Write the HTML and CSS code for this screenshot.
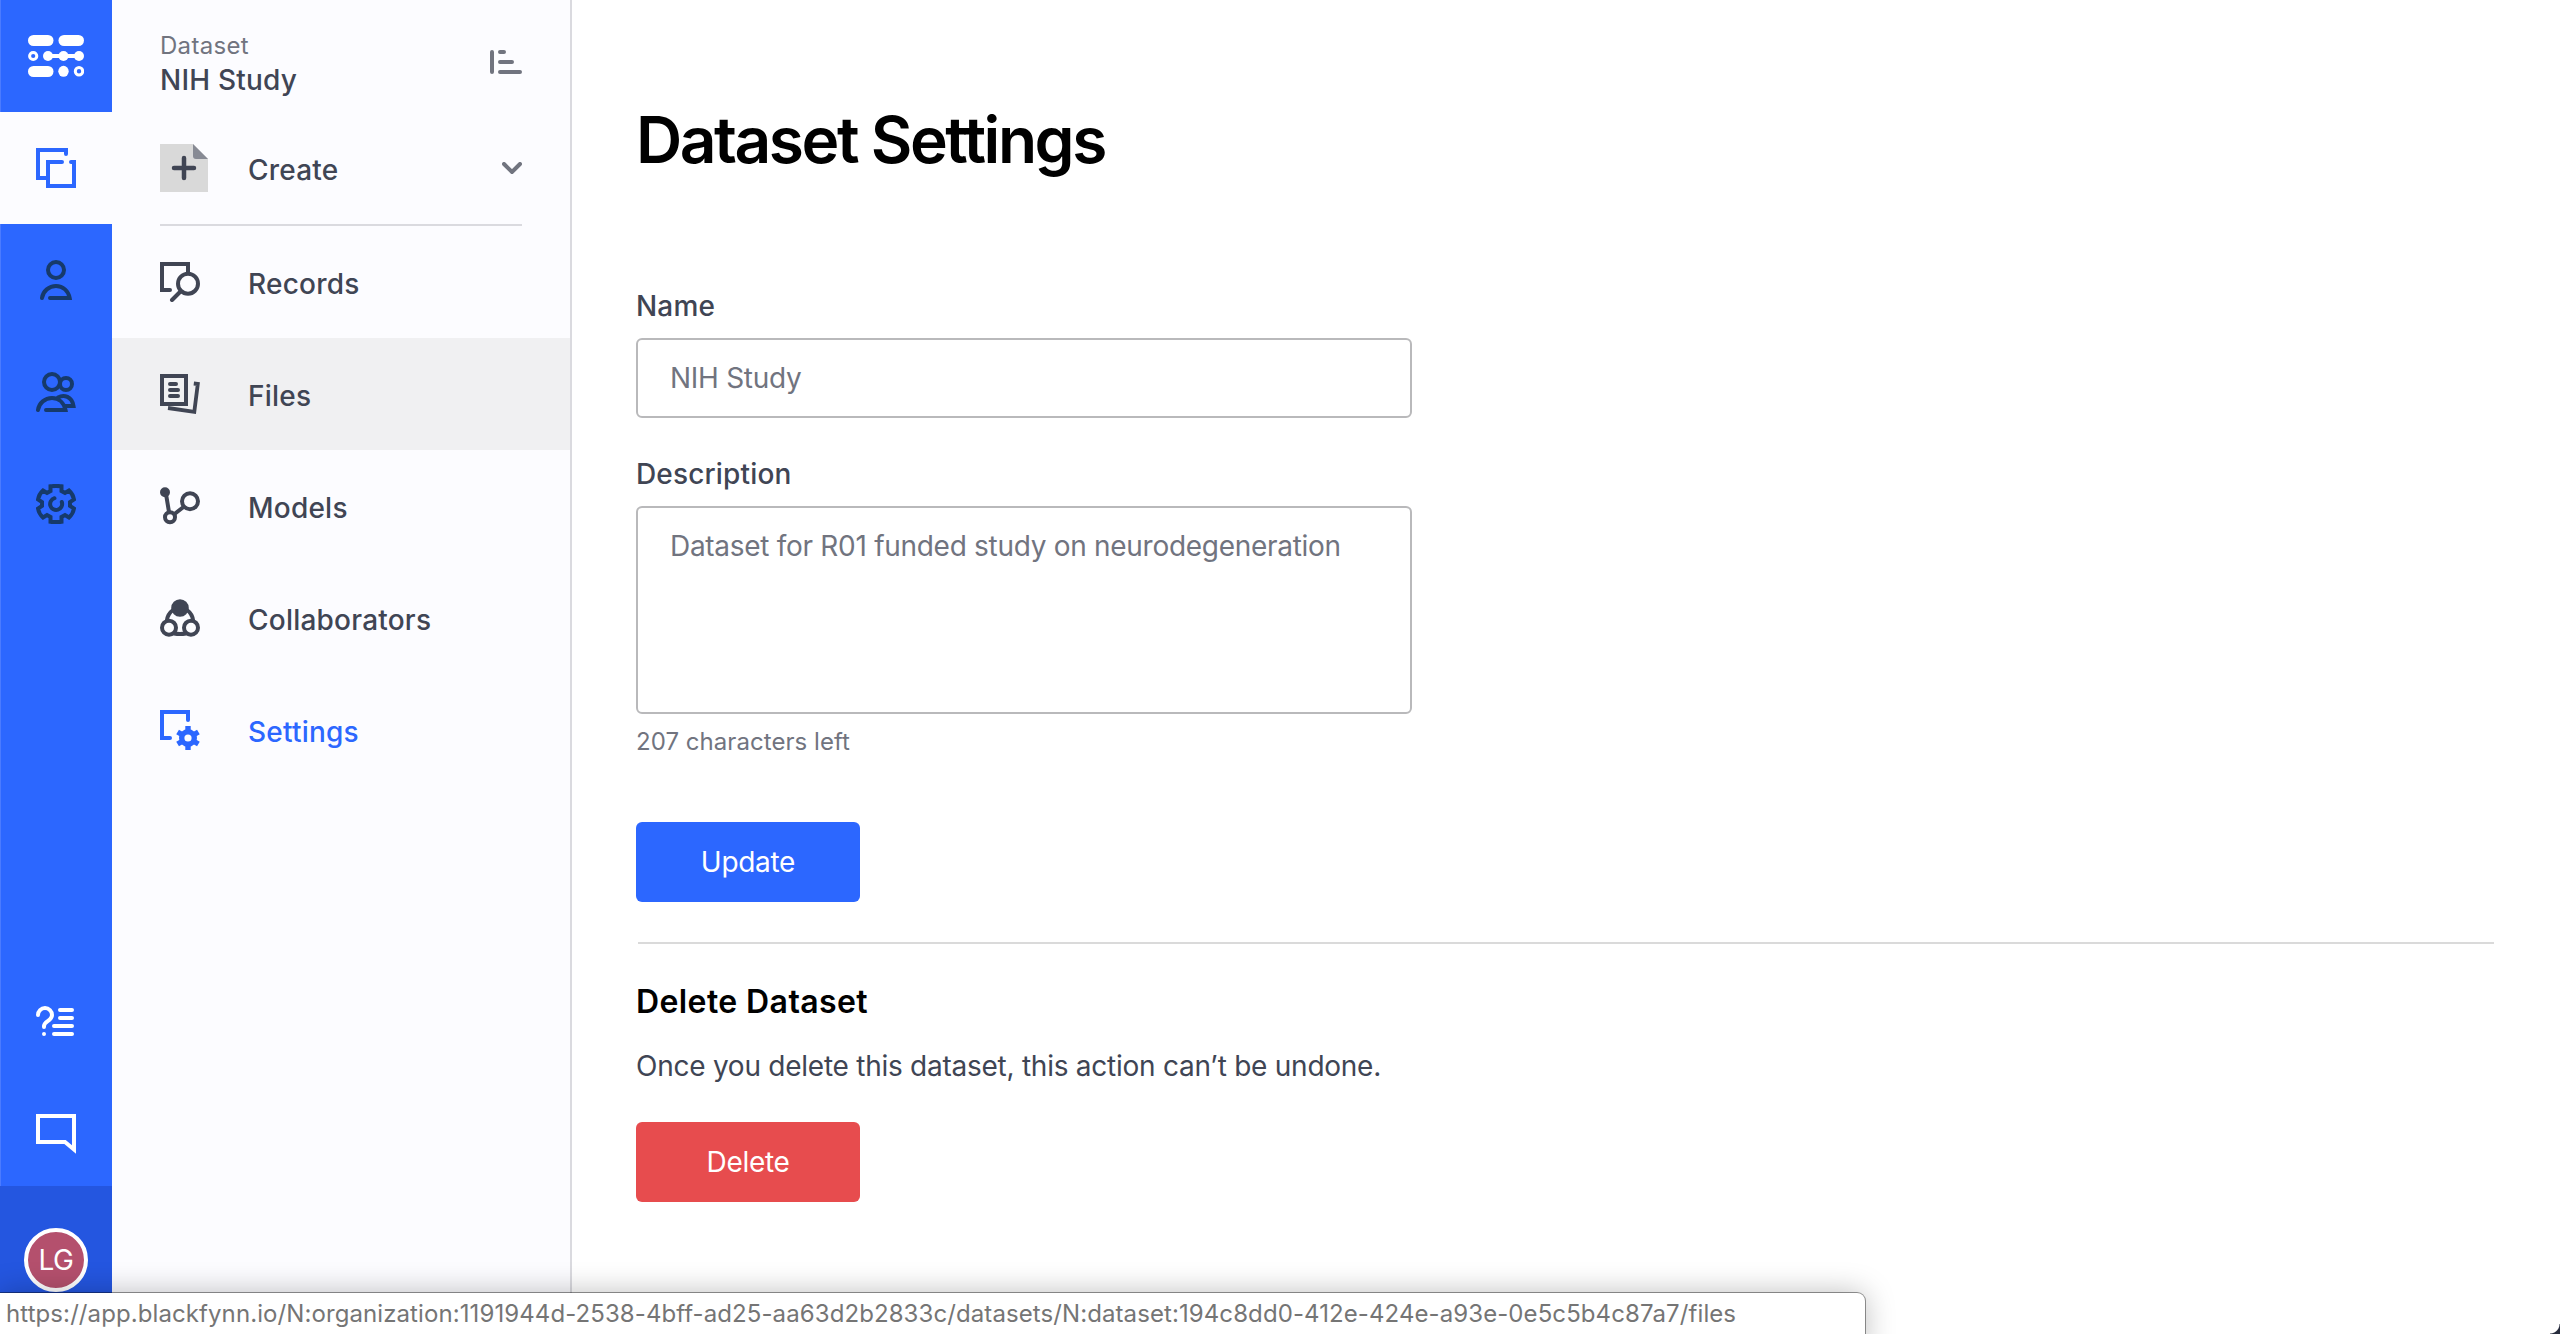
FILE: index.html
```html
<!DOCTYPE html>
<html lang="en">
<head>
<meta charset="utf-8">
<title>Dataset Settings</title>
<link rel="stylesheet" href="styles.css">
</head>
<body>
<div class="app">
  <nav class="rail">
    <a class="rail-item">
      <svg class="logo" viewBox="28 35 56 42"><g fill="#fff"><rect x="28" y="35" width="25.500" height="11" rx="5.500"/><rect x="58.500" y="35" width="25.500" height="11" rx="5.500"/><rect x="28" y="66" width="25.500" height="11" rx="5.500"/><circle cx="48" cy="56" r="5"/><circle cx="63.500" cy="56" r="5"/><circle cx="79" cy="56" r="5"/><rect x="48" y="54" width="31" height="4"/><ellipse cx="63.500" cy="71.300" rx="5.200" ry="5.500"/></g><g fill="none" stroke="#fff" stroke-width="3"><circle cx="33.200" cy="56" r="3.600"/><circle cx="79" cy="71.300" r="3.700"/></g></svg>
    </a>
    <a class="rail-item rail-item-active">
      <svg class="icon" viewBox="0 0 40 40"><path d="M30 6V2H2v28h8M26 14H12v24h26V14h-3"/></svg>
    </a>
    <a class="rail-item">
      <svg class="icon" viewBox="0 0 40 40"><circle cx="20" cy="10" r="8"/><path d="M6 38c1-7 7-12 14-12s12.500 5 13.700 12H14"/></svg>
    </a>
    <a class="rail-item">
      <svg class="icon" viewBox="0 0 40 40"><circle cx="16" cy="10" r="8"/><circle cx="30" cy="12" r="6"/><path d="M2 38c1-7 7-12 14-12s12 5 13.500 12H10M22 25.500c6-3.500 14-1 15.500 8.500h-9"/></svg>
    </a>
    <a class="rail-item">
      <svg class="icon" viewBox="0 0 40 40"><path d="M14.500 2.300Q20 1.500 25.500 2.300V7L29 9l4-2.500Q37 10 38 15.500L34 18v4l4 2.500Q37 30 33 33.500L29 31l-3.500 2v4.700Q20 38.500 14.500 37.700V33L11 31l-4 2.500Q3 30 2 24.500L6 22v-4l-4-2.500Q3 10 7 6.500L11 9l3.500-2zM18.500 14.200A6 6 0 1 0 25.800 18"/></svg>
    </a>
    <div class="rail-bottom">
      <a class="rail-item">
        <svg class="icon icon-white" viewBox="0 0 40 40"><path d="M2 9a7 7 0 0 1 14 0c0 6-8 6-8 11v1M8 28v.1M24 4h12M24 12h12M18 20h18M18 28h18"/></svg>
      </a>
      <a class="rail-item rail-chat">
        <svg class="icon icon-white" viewBox="0 0 40 40"><path d="M2 2h36v33.500L29 28H2z"/></svg>
      </a>
      <a class="rail-item rail-user"><span class="avatar">LG</span></a>
    </div>
  </nav>

  <aside class="sidebar">
    <header class="side-head">
      <div><div class="side-kicker">Dataset</div><div class="side-title">NIH Study</div></div>
      <svg class="sort" viewBox="0 0 32 24"><path d="M2 2v20M10 2h4M10 12h12M10 22h20"/></svg>
    </header>
    <div class="create">
      <svg class="doc" viewBox="0 0 48 48"><path d="M0 0h33l15 15v33H0z" fill="#d9d9d9"/><path d="M33 0l15 15H36q-3 0-3-3z" fill="#878a94"/><path d="M24 14v20M14 24h20" stroke="#404554" stroke-width="4.500" stroke-linecap="round"/></svg>
      <span class="create-label">Create</span>
      <svg class="chev" viewBox="0 0 20 12"><path d="M2 2l8 8 8-8"/></svg>
    </div>
    <a class="side-item">
      <svg class="icon" viewBox="0 0 40 40"><path d="M28 10V2H2v26h8"/><circle cx="28" cy="21.700" r="10"/><path d="M20.500 29.500L12 38"/></svg><span class="side-label">Records</span>
    </a>
    <a class="side-item side-item-hover">
      <svg class="icon" viewBox="0 0 40 40"><path d="M2 2h24v28H2zM10 10h6M10 16h8M10 22h8"/><path d="M8 34l26.300 3.800L37.800 10l-4-.500" stroke-width="3.800" stroke-linecap="butt"/></svg><span class="side-label">Files</span>
    </a>
    <a class="side-item">
      <svg class="icon" viewBox="0 0 40 40"><circle cx="5" cy="6.300" r="3" fill="currentColor"/><circle cx="10" cy="31.300" r="5"/><circle cx="30" cy="15.300" r="8"/><path d="M6 8l3 18M14.500 28l9-7"/></svg><span class="side-label">Models</span>
    </a>
    <a class="side-item">
      <svg class="icon" viewBox="0 0 40 40"><circle cx="20" cy="10" r="6.800" fill="currentColor"/><circle cx="9" cy="29.700" r="7"/><circle cx="31" cy="29.700" r="7"/><path d="M13 12c-4 3-5.500 6-6 10M27 12c4 3 5.500 6 6 10M14 35.500q6 1 12 0"/></svg><span class="side-label">Collaborators</span>
    </a>
    <a class="side-item side-item-current">
      <svg class="icon" viewBox="0 0 40 40"><path d="M28 10V2H2v26h8"/><g stroke-width="5.400" stroke-linecap="butt"><circle cx="28" cy="28" r="6.300"/><path d="M28 16v5M28 35v5M17.600 22l4.300 2.500M34.100 31.500l4.300 2.500M17.600 34l4.300-2.500M34.100 24.500l4.300-2.500"/></g></svg><span class="side-label">Settings</span>
    </a>
  </aside>

  <main class="content">
    <h1 class="page-title">Dataset Settings</h1>
    <label class="label">Name</label>
    <div class="field">NIH Study</div>
    <label class="label">Description</label>
    <div class="field field-area">Dataset for R01 funded study on neurodegeneration</div>
    <p class="hint">207 characters left</p>
    <button class="btn">Update</button>
    <hr class="rule">
    <h2 class="subtitle">Delete Dataset</h2>
    <p class="copy">Once you delete this dataset, this action can’t be undone.</p>
    <button class="btn btn-danger">Delete</button>
  </main>
</div>
<div class="status">https://app.blackfynn.io/N:organization:1191944d-2538-4bff-ad25-aa63d2b2833c/datasets/N:dataset:194c8dd0-412e-424e-a93e-0e5c5b4c87a7/files</div>
<div class="corner"></div>
</body>
</html>
```
FILE: styles.css
```css
* { box-sizing: border-box; }
body { margin: 0; height: 1334px; overflow: hidden; background: #fff; font-family: Inter, "Liberation Sans", sans-serif; color: #404554; }
.app { display: flex; height: 1334px; }
.rail { width: 112px; background: #2c67ff; display: flex; flex-direction: column; color: #163a6b; box-shadow: inset 1px 0 #4b7bff; }
.rail-item { height: 112px; display: flex; align-items: center; justify-content: center; }
.rail-item-active { background: #fcfcff; color: #2c67ff; }
.rail-bottom { margin-top: auto; }
.rail-chat { height: 104px; }
.rail-user { height: 148px; background: #2456e0; }
.logo { width: 56px; height: 42px; }
.icon { width: 40px; height: 40px; flex: none; fill: none; stroke: currentColor; stroke-width: 4; stroke-linecap: round; }
.icon-white { color: #fff; }
.avatar { width: 64px; height: 64px; border: 4px solid #fff; border-radius: 50%; background: #b4506d; color: #fff; font-size: 28px; line-height: 56px; letter-spacing: -.500px; text-align: center; }
.sidebar { width: 460px; background: #fcfcff; border-right: 2px solid #dadadf; }
.side-head { height: 112px; padding: 30px 48px 0; display: flex; justify-content: space-between; }
.side-kicker { font-size: 24px; line-height: 32px; color: #71747f; letter-spacing: .300px; }
.side-title { font-size: 28px; line-height: 36px; font-weight: 500; letter-spacing: .200px; }
.sort { width: 32px; height: 24px; margin-top: 20px; fill: none; stroke: #71747f; stroke-width: 4; stroke-linecap: round; }
.create { height: 114px; margin: 0 48px; border-bottom: 2px solid #dadadf; display: flex; align-items: center; font-size: 28px; font-weight: 500; letter-spacing: .200px; }
.doc { width: 48px; height: 48px; }
.create-label { padding: 4px 0 0 40px; flex: 1; }
.chev { width: 20px; height: 12px; fill: none; stroke: #71747f; stroke-width: 4; stroke-linecap: round; }
.side-item { height: 112px; padding-left: 48px; display: flex; align-items: center; gap: 48px; font-size: 28px; font-weight: 500; letter-spacing: .220px; }
.side-label { padding-top: 4px; }
.side-item-hover { background: #f0f0f2; }
.side-item-current { color: #2c67ff; }
.content { flex: 1; padding: 100px 66px 0 64px; }
.page-title { margin: 0 0 110px; font-size: 64px; line-height: 80px; font-weight: 600; color: #000; letter-spacing: -2.450px; }
.label { display: block; font-size: 28px; line-height: 32px; margin-bottom: 16px; font-weight: 500; letter-spacing: .150px; }
.field { width: 776px; height: 80px; border: 2px solid #b9b9bb; border-radius: 6px; padding: 19px 32px; font-size: 28px; line-height: 38px; color: #71747f; letter-spacing: -.290px; margin-bottom: 40px; }
.field-area { height: 208px; margin-bottom: 12px; }
.hint { margin: 0 0 64px; font-size: 24px; line-height: 32px; color: #71747f; letter-spacing: .050px; }
.btn { display: block; width: 224px; height: 80px; border: 0; border-radius: 6px; background: #2c67ff; color: #fff; font: 400 28px/80px Inter, sans-serif; letter-spacing: -.300px; padding: 0; }
.btn-danger { background: #e74c4e; }
.rule { border: 0; height: 2px; margin: 40px 0 40px 2px; background: #dadada; }
.subtitle { margin: 0 0 26px; font-size: 32px; line-height: 36px; font-weight: 600; color: #000; letter-spacing: .400px; }
.copy { margin: 0 0 36px; font-size: 28px; line-height: 40px; letter-spacing: -.250px; }
.status { position: absolute; left: 0; top: 1293px; width: 1865px; height: 60px; background: #fff; border-radius: 0 8px 0 0; box-shadow: 0 0 0 1px #0006, 0 0 30px #0004; padding-left: 6px; font-size: 24px; line-height: 42px; letter-spacing: .090px; color: #757575; white-space: nowrap; }
.corner { position: absolute; right: 0; bottom: 0; width: 10px; height: 10px; background: radial-gradient(circle at 0 0, transparent 9px, #272c3d 10px); }
```
